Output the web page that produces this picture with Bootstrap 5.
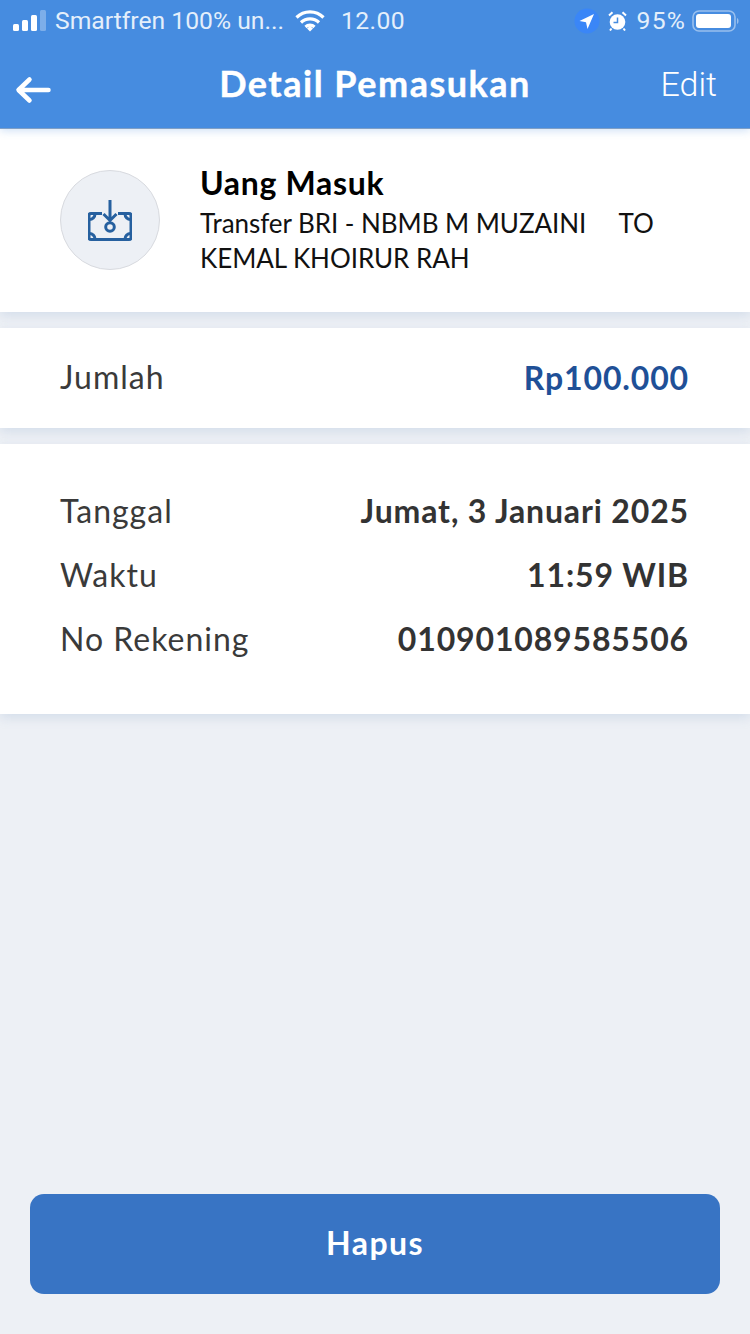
<!DOCTYPE html>
<html lang="en">
<head>
    <meta charset="UTF-8">
    <title>Detail Pemasukan</title>
    <link href="https://cdn.jsdelivr.net/npm/bootstrap@5.3.3/dist/css/bootstrap.min.css" rel="stylesheet">
    <style>
        body {
            font-family: Lato, "Open Sans", sans-serif;
            background-color: #edf0f5;
            color: #333;
        }

        .app-screen {
            height: 1334px;
        }

        .app-header {
            background-color: #468ce0;
            color: #fff;
            height: 129px;
            border-bottom: 1px solid #7f9fc6;
            box-shadow: 0 2px 8px rgba(70, 140, 224, 0.25);
        }

        .status-bar {
            height: 40px;
            padding: 2px 10px 0 13px;
            font-family: Roboto, sans-serif;
            font-size: 24.7px;
            color: #e4effb;
        }

        .wifi-icon {
            margin-left: 11px;
        }

        .status-time {
            margin-left: 16px;
            letter-spacing: 0.4px;
        }

        .status-right {
            gap: 8px;
        }

        .status-percent {
            letter-spacing: 1.2px;
            margin-left: 2px;
            margin-right: -2px;
        }

        .title-bar {
            height: 88px;
            padding: 0 33px 0 15px;
        }

        .back-arrow {
            margin-top: 12px;
        }

        .title-text {
            font-size: 36px;
            font-weight: 700;
            letter-spacing: 1.5px;
            -webkit-text-stroke: 0.4px #fff;
            left: 0;
            right: 0;
            top: 16px;
            text-align: center;
        }

        .edit-text {
            font-family: Roboto, sans-serif;
            font-weight: 300;
            font-size: 34px;
        }

        .panel {
            background-color: #fff;
            box-shadow: 0 4px 10px rgba(150, 175, 210, 0.28);
        }

        .panel-income {
            height: 183px;
            padding: 41px 60px 0;
            margin-bottom: 16px;
        }

        .icon-circle {
            width: 100px;
            height: 100px;
            background-color: #edf0f5;
            border: 1px solid #d8dadf;
            margin-right: 40px;
        }

        .income-title {
            font-size: 32px;
            font-weight: 700;
            letter-spacing: 0.7px;
            line-height: 30px;
            color: #000;
            margin: -2px 0 8px;
        }

        .income-desc {
            font-size: 26px;
            letter-spacing: -0.05px;
            line-height: 35px;
            color: #111;
            white-space: pre-wrap;
        }

        .panel-amount {
            height: 100px;
            padding: 0 61px 0 60px;
            margin-bottom: 16px;
        }

        .panel-detail {
            height: 270px;
            padding: 35px 61px 0 60px;
        }

        .info-row {
            height: 64px;
        }

        .info-label {
            font-size: 32px;
            letter-spacing: 1px;
            color: #3a3a3a;
            margin-top: -2px;
        }

        .panel-detail .info-label {
            margin-top: 0;
        }

        .info-value {
            font-size: 32px;
            font-weight: 700;
            color: #333;
            letter-spacing: 0.85px;
        }

        .amount-value {
            color: #1f5097;
        }

        .btn-hapus {
            height: 100px;
            margin: 0 30px 40px;
            padding-bottom: 9px;
            border-radius: 14px;
            background-color: #3874c4;
            border: 0;
            color: #fff;
            font-size: 32px;
            font-weight: 700;
            letter-spacing: 1.4px;
        }
    </style>
</head>
<body>

<div class="app-screen d-flex flex-column">
    <div class="app-header position-relative">
        <div class="status-bar d-flex align-items-center">
            <svg width="34" height="22" viewBox="0 0 34 22" class="me-2">
                <rect x="0" y="14" width="6" height="7" rx="1.5" fill="#fff"/>
                <rect x="9" y="10" width="6" height="11" rx="1.5" fill="#fff"/>
                <rect x="18" y="5" width="6" height="16" rx="1.5" fill="#fff"/>
                <rect x="27" y="0" width="6" height="21" rx="1.5" fill="#fff" opacity="0.3"/>
            </svg>
            <span>Smartfren 100% un...</span>
            <svg width="30" height="22" viewBox="0 0 30 22" class="wifi-icon">
                <path d="M1.500 7.500a19 19 0 0 1 27 0M6 12.500a13 13 0 0 1 18 0M10.500 17a6.500 6.500 0 0 1 9 0" fill="none" stroke="#fff" stroke-width="3.200"/>
                <path d="M12 18.500l3-2.600 3 2.600-3 3z" fill="#fff"/>
            </svg>
            <span class="status-time">12.00</span>
            <span class="status-right ms-auto d-flex align-items-center">
                <svg width="26" height="26" viewBox="0 0 26 26">
                    <circle cx="13" cy="13" r="12.500" fill="#3a86f7"/>
                    <path d="M20 6L5.500 13l6.500 1.200L13.500 21z" fill="#fff"/>
                </svg>
                <svg width="19" height="20" viewBox="0 0 19 20">
                    <circle cx="9.500" cy="11" r="7.800" fill="#fff"/>
                    <path d="M9.500 6.500V11.500H5.500" fill="none" stroke="#468ce0" stroke-width="1.500"/>
                    <path d="M1 4.500L4.500 1.200M18 4.500L14.500 1.200M3.500 17.500L2 19.500M15.500 17.500L17 19.500" stroke="#fff" stroke-width="2" fill="none"/>
                </svg>
                <span class="status-percent">95%</span>
                <svg width="48" height="24" viewBox="0 0 48 24">
                    <rect x="1" y="2" width="42" height="20" rx="6" fill="none" stroke="#fff" stroke-opacity="0.45" stroke-width="1.600"/>
                    <rect x="4" y="5" width="35" height="14" rx="3" fill="#fff"/>
                    <path d="M45 9c2 .6 2 5.400 0 6z" fill="#fff" fill-opacity="0.45"/>
                </svg>
            </span>
        </div>
        <div class="title-bar d-flex align-items-center justify-content-between position-relative">
            <svg width="36" height="28" viewBox="0 0 36 28" class="back-arrow">
                <path d="M33.500 14H4M14.500 3.500L3.500 14l11 10.500" fill="none" stroke="#fff" stroke-width="4.500" stroke-linecap="round" stroke-linejoin="round"/>
            </svg>
            <div class="title-text position-absolute">Detail Pemasukan</div>
            <span class="edit-text">Edit</span>
        </div>
    </div>

    <div class="panel panel-income d-flex">
        <div class="icon-circle rounded-circle d-flex align-items-center justify-content-center flex-shrink-0">
            <svg width="44" height="42" viewBox="0 0 44 42">
                <path d="M14 14.500H3a2 2 0 0 0-2 2v22a2 2 0 0 0 2 2h38a2 2 0 0 0 2-2v-22a2 2 0 0 0-2-2H30" fill="none" stroke="#26609f" stroke-width="3"/>
                <path d="M22 1v20M15.500 15L22 21.500 28.500 15" fill="none" stroke="#26609f" stroke-width="3"/>
                <circle cx="22" cy="28" r="4.300" fill="none" stroke="#26609f" stroke-width="3"/>
                <path d="M1.500 20.500c3 0 5.500-2.500 5.500-5.500M42.500 20.500c-3 0-5.500-2.500-5.500-5.500M1.500 34.500c3 0 5.500 2.500 5.500 5.500M42.500 34.500c-3 0-5.500 2.500-5.500 5.500" fill="none" stroke="#26609f" stroke-width="3"/>
            </svg>
        </div>
        <div>
            <div class="income-title">Uang Masuk</div>
            <div class="income-desc">Transfer BRI - NBMB M MUZAINI     TO KEMAL KHOIRUR RAH</div>
        </div>
    </div>

    <div class="panel panel-amount d-flex align-items-center justify-content-between">
        <span class="info-label">Jumlah</span>
        <span class="info-value amount-value">Rp100.000</span>
    </div>

    <div class="panel panel-detail">
        <div class="info-row d-flex align-items-center justify-content-between">
            <span class="info-label">Tanggal</span>
            <span class="info-value">Jumat, 3 Januari 2025</span>
        </div>
        <div class="info-row d-flex align-items-center justify-content-between">
            <span class="info-label">Waktu</span>
            <span class="info-value">11:59 WIB</span>
        </div>
        <div class="info-row d-flex align-items-center justify-content-between">
            <span class="info-label">No Rekening</span>
            <span class="info-value">010901089585506</span>
        </div>
    </div>

    <button type="button" class="btn btn-hapus mt-auto">Hapus</button>
</div>

<script src="https://cdn.jsdelivr.net/npm/bootstrap@5.3.3/dist/js/bootstrap.bundle.min.js"></script>
</body>
</html>
